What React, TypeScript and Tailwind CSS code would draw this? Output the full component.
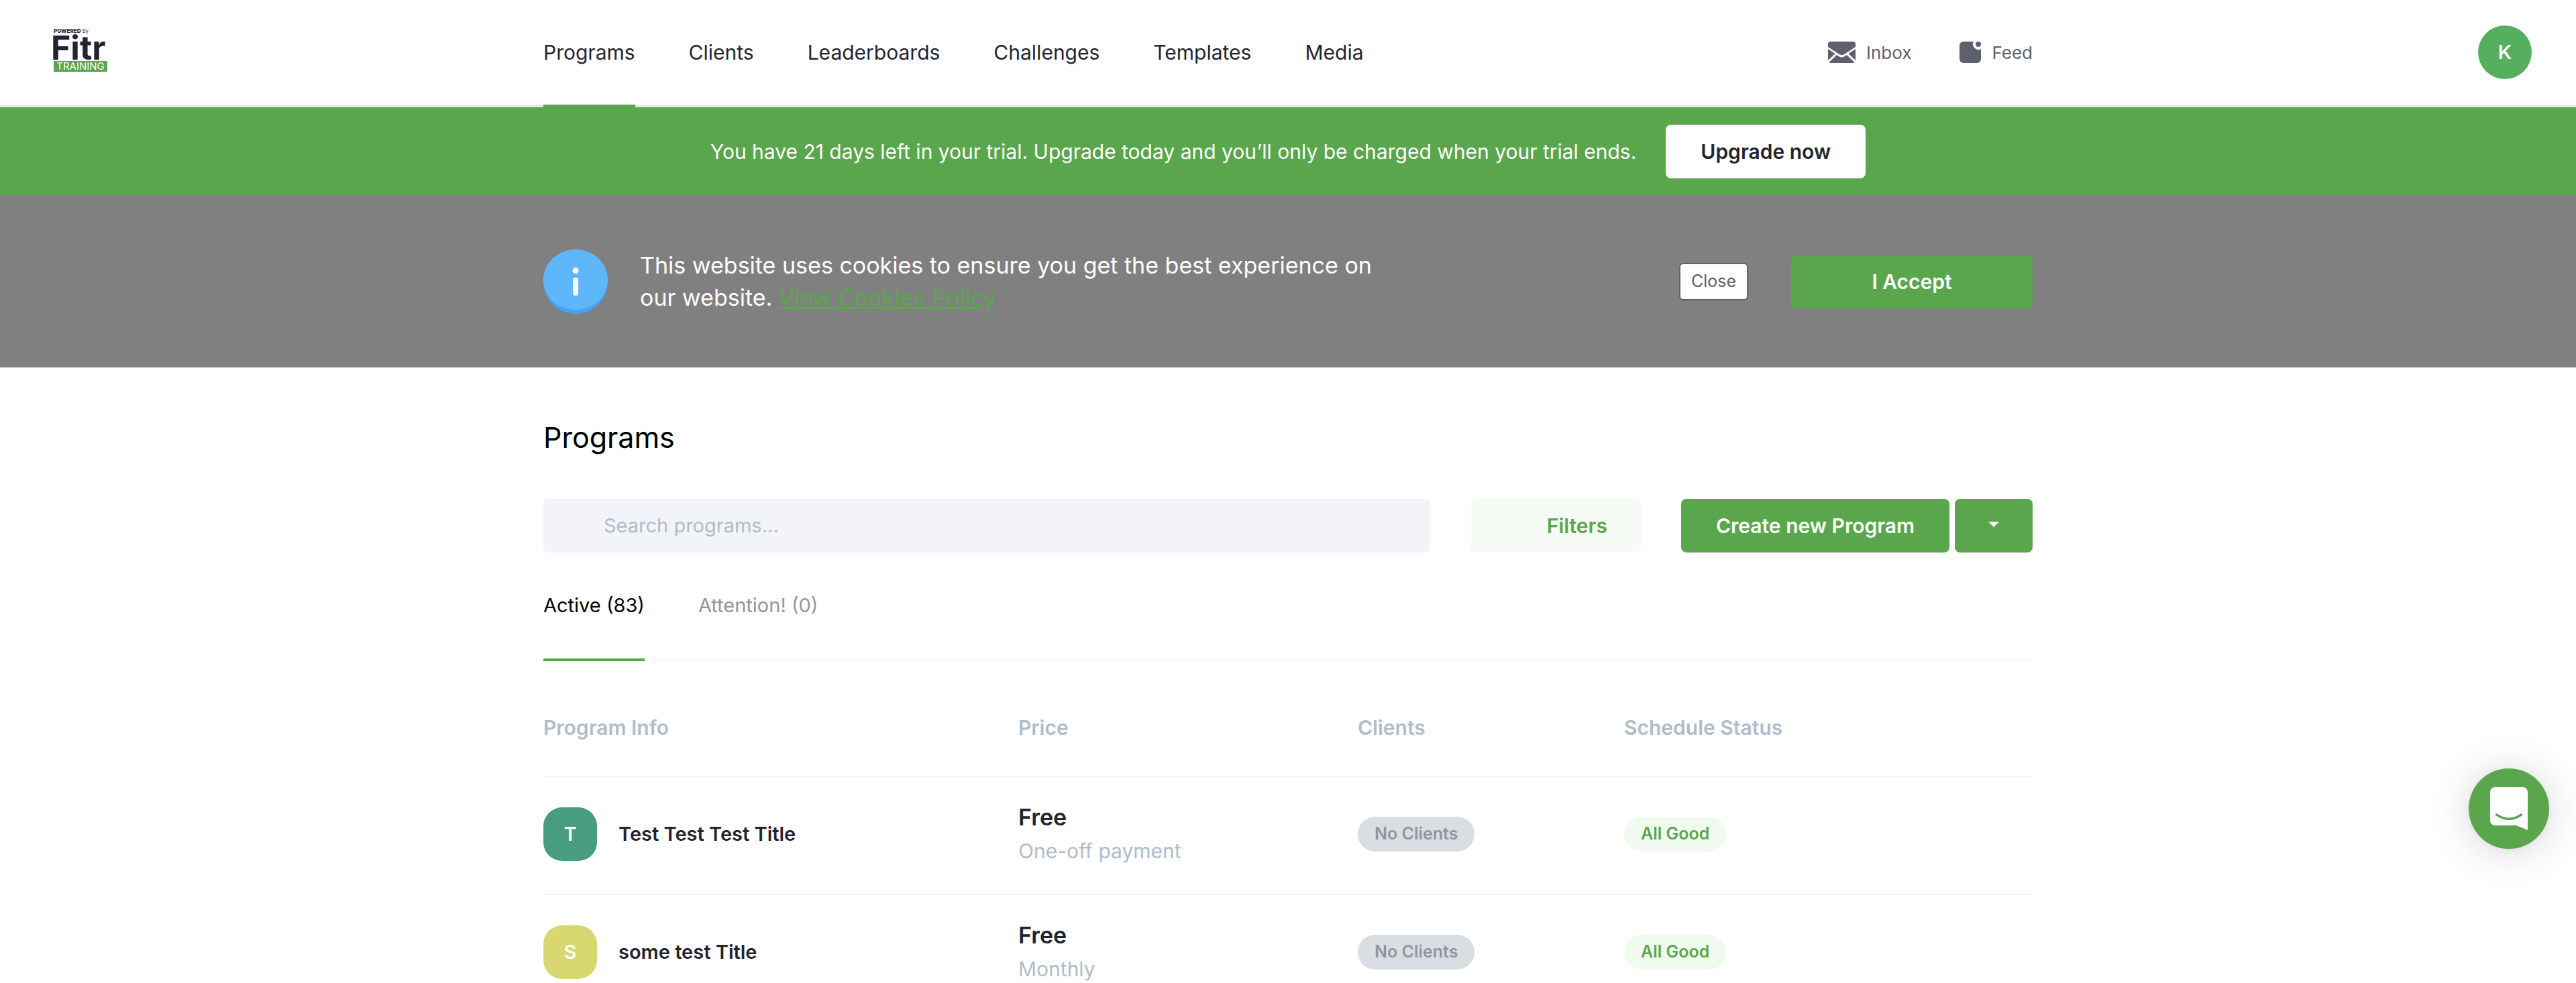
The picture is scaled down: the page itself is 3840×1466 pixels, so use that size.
const NAV = ["Programs", "Clients", "Leaderboards", "Challenges", "Templates", "Media"];

const PROGRAMS = [
  { initial: "T", tile: "bg-[#489d81]", title: "Test Test Test Title", price: "Free", billing: "One-off payment" },
  { initial: "S", tile: "bg-[#d9d770]", title: "some test Title", price: "Free", billing: "Monthly" },
];

function Logo() {
  return (
    <a href="#" aria-label="Powered by Fitr Training" className="flex w-20 flex-col text-[#23242f]">
      <span className="text-[8px] leading-[9px] whitespace-nowrap">
        <b className="font-extrabold">POWERED</b> by
      </span>
      <span className="-ml-1 text-[50px] leading-[40px] font-bold">Fitr</span>
      <span className="bg-[#5aa64c] text-center text-[15px] leading-[16px] text-white">TRAINING</span>
    </a>
  );
}

function InboxIcon() {
  return (
    <svg width="41" height="32" viewBox="0 0 41 32" fill="#5f606d" aria-hidden="true">
      <path d="M0 4a4 4 0 0 1 4-4h33a4 4 0 0 1 4 4v4L25 18.500q-4.500 3-9 0L0 8z" />
      <path d="M0 11l10.500 7L0 28zM41 11v17l-10.500-10zM1.500 31L13 20l3.500 2.200q4 2.500 8 0L28 20l11.500 11q-1 1-2.500 1H4q-1.500 0-2.500-1z" />
    </svg>
  );
}

function FeedIcon() {
  return (
    <svg width="32" height="32" viewBox="0 0 32 32" fill="#5f606d" aria-hidden="true">
      <path d="M6 0h15.100a8 8 0 0 0 10.900 10.900V26a6 6 0 0 1-6 6H6a6 6 0 0 1-6-6V6a6 6 0 0 1 6-6z" />
      <circle cx="28" cy="4" r="4" />
    </svg>
  );
}

function InfoIcon() {
  return (
    <svg width="96" height="96" viewBox="0 0 96 96" className="shrink-0" aria-hidden="true">
      <circle cx="48" cy="48" r="48" fill="#48a3f6" />
      <ellipse cx="48" cy="45" rx="48" ry="45" fill="#5fb7fb" />
      <circle cx="48" cy="31.500" r="4.500" fill="#fff" />
      <rect x="44" y="42" width="8" height="27" rx="4" fill="#fff" />
    </svg>
  );
}

function Header() {
  return (
    <header className="grid h-40 grid-cols-[1fr_minmax(0,2220px)_1fr] items-stretch border-b-4 border-[#e8e8e8] bg-white">
      <div className="flex items-center pb-2 pl-20">
        <Logo />
      </div>
      <div className="-mb-1 flex justify-between">
        <nav className="flex gap-20 text-[30px] text-[#23242f]">
          {NAV.map((item, i) => (
            <a
              key={item}
              href="#"
              className={
                i === 0
                  ? "flex items-center border-b-4 border-[#5aa64c]"
                  : "flex items-center border-b-4 border-transparent"
              }
            >
              {item}
            </a>
          ))}
        </nav>
        <div className="flex items-center gap-[72px] pb-1 text-[26px] text-[#5f606d]">
          <a href="#" className="flex items-center gap-4">
            <InboxIcon />
            Inbox
          </a>
          <a href="#" className="flex items-center gap-4">
            <FeedIcon />
            Feed
          </a>
        </div>
      </div>
      <div className="flex items-center justify-end pr-[66px]">
        <button className="size-20 rounded-full bg-[#56ae5f] text-[29px] font-semibold text-white">K</button>
      </div>
    </header>
  );
}

function Tabs() {
  return (
    <div role="tablist" className="flex gap-20 border-b-4 border-[#fafafa] text-[29px]">
      <button role="tab" aria-selected="true" className="-mb-1 border-b-4 border-[#5aa64c] py-14 leading-[46px] text-black">
        Active (83)
      </button>
      <button role="tab" aria-selected="false" className="-mb-1 border-b-4 border-transparent py-14 leading-[46px] text-[#9394a1]">
        Attention! (0)
      </button>
    </div>
  );
}

function ProgramTable() {
  return (
    <table className="w-full table-fixed border-collapse text-left">
      <colgroup>
        <col className="w-[708px]" />
        <col className="w-[506px]" />
        <col className="w-[397px]" />
        <col />
      </colgroup>
      <thead>
        <tr className="h-[172px] border-b-2 border-[#f3f4f9] text-[30px] text-[#b0bcc9]">
          <th className="pt-7 font-semibold">Program Info</th>
          <th className="pt-7 font-semibold">Price</th>
          <th className="pt-7 font-semibold">Clients</th>
          <th className="pt-7 font-semibold">Schedule Status</th>
        </tr>
      </thead>
      <tbody>
        {PROGRAMS.map((p) => (
          <tr key={p.title} className="h-44 border-b-2 border-[#f3f4f9]">
            <td className="pb-1">
              <div className="flex items-center gap-8">
                <span className={`flex size-20 items-center justify-center rounded-[28px] text-[29px] font-semibold text-white ${p.tile}`}>
                  {p.initial}
                </span>
                <a href="#" className="text-[29px] font-semibold text-[#23242f]">{p.title}</a>
              </div>
            </td>
            <td className="pb-1">
              <div className="text-[34px] leading-[51px] font-semibold text-[#23242f]">{p.price}</div>
              <div className="text-[30px] leading-[51px] text-[#b0bcc9]">{p.billing}</div>
            </td>
            <td className="pb-1">
              <span className="inline-flex h-[52px] items-center rounded-full bg-[#d9dee3] px-[25px] align-middle text-[25px] font-semibold text-[#9394a1]">
                No Clients
              </span>
            </td>
            <td className="pb-1">
              <span className="inline-flex h-[52px] items-center rounded-full bg-[#f0faef] px-[25px] align-middle text-[25px] font-semibold text-[#5aa64c]">
                All Good
              </span>
            </td>
          </tr>
        ))}
      </tbody>
    </table>
  );
}

export default function App() {
  return (
    <div className="min-h-screen bg-white font-['Inter',sans-serif] text-[#23242f]">
      <Header />

      <section className="flex h-[132px] items-center justify-center gap-11 bg-[#5aa64c]">
        <p className="text-[30px] text-white">
          You have 21 days left in your trial. Upgrade today and you’ll only be charged when your trial ends.
        </p>
        <button className="h-20 rounded-lg bg-white px-[52px] text-[30px] font-semibold">Upgrade now</button>
      </section>

      <section className="flex h-64 justify-center bg-[#808080] text-white">
        <div className="flex w-full max-w-[2220px] items-center">
          <InfoIcon />
          <p className="ml-12 max-w-[1100px] flex-1 text-[34px] leading-[48px]">
            This website uses cookies to ensure you get the best experience on our website.{" "}
            <a href="#" className="text-[#5aa64c] underline">View Cookies Policy</a>
          </p>
          <button className="ml-auto h-14 rounded-md border-2 border-[#5f606d] bg-white px-4 text-[25px] text-[#5f606d]">
            Close
          </button>
          <button className="ml-16 h-20 w-[360px] rounded-lg bg-[#5aa64c] text-[30px] font-semibold">I Accept</button>
        </div>
      </section>

      <main className="mx-auto w-full max-w-[2220px] pt-[76px]">
        <h1 className="text-[43px] leading-[56px] text-black">Programs</h1>

        <div className="mt-16 flex h-20 gap-[60px]">
          <input
            type="search"
            aria-label="Search programs"
            placeholder="Search programs..."
            className="min-w-0 flex-1 rounded-lg bg-[#f3f4f9] pl-[90px] text-[29px] placeholder:text-[#b0bcc9]"
          />
          <button className="w-[254px] rounded-lg bg-[#f6fbf5] pr-[50px] text-right text-[30px] font-semibold text-[#5aa64c]">
            Filters
          </button>
          <div className="flex gap-2 text-white">
            <button className="w-[400px] rounded-lg bg-[#5aa64c] text-[30px] font-semibold">Create new Program</button>
            <button aria-label="More options" className="flex w-[116px] items-center justify-center rounded-lg bg-[#5aa64c] pb-1">
              <svg width="16" height="8" viewBox="0 0 16 8" fill="#fff" aria-hidden="true">
                <path d="M0 0h16L8 8z" />
              </svg>
            </button>
          </div>
        </div>

        <Tabs />
        <ProgramTable />
      </main>

      <button
        aria-label="Open chat"
        className="fixed right-10 bottom-[200px] flex size-[120px] items-center justify-center rounded-full bg-[#5aa64c] shadow-[0_2px_12px_rgba(0,0,0,0.06),0_4px_64px_rgba(0,0,0,0.16)]"
      >
        <svg width="56" height="64" viewBox="0 0 56 64" aria-hidden="true">
          <path d="M7 0h42a7 7 0 0 1 7 7v57l-17-7H7a7 7 0 0 1-7-7V7a7 7 0 0 1 7-7z" fill="#fff" />
          <path d="M9.500 41q18.500 12.500 37 0" fill="none" stroke="#5aa64c" strokeWidth="3.500" strokeLinecap="round" />
        </svg>
      </button>
    </div>
  );
}
